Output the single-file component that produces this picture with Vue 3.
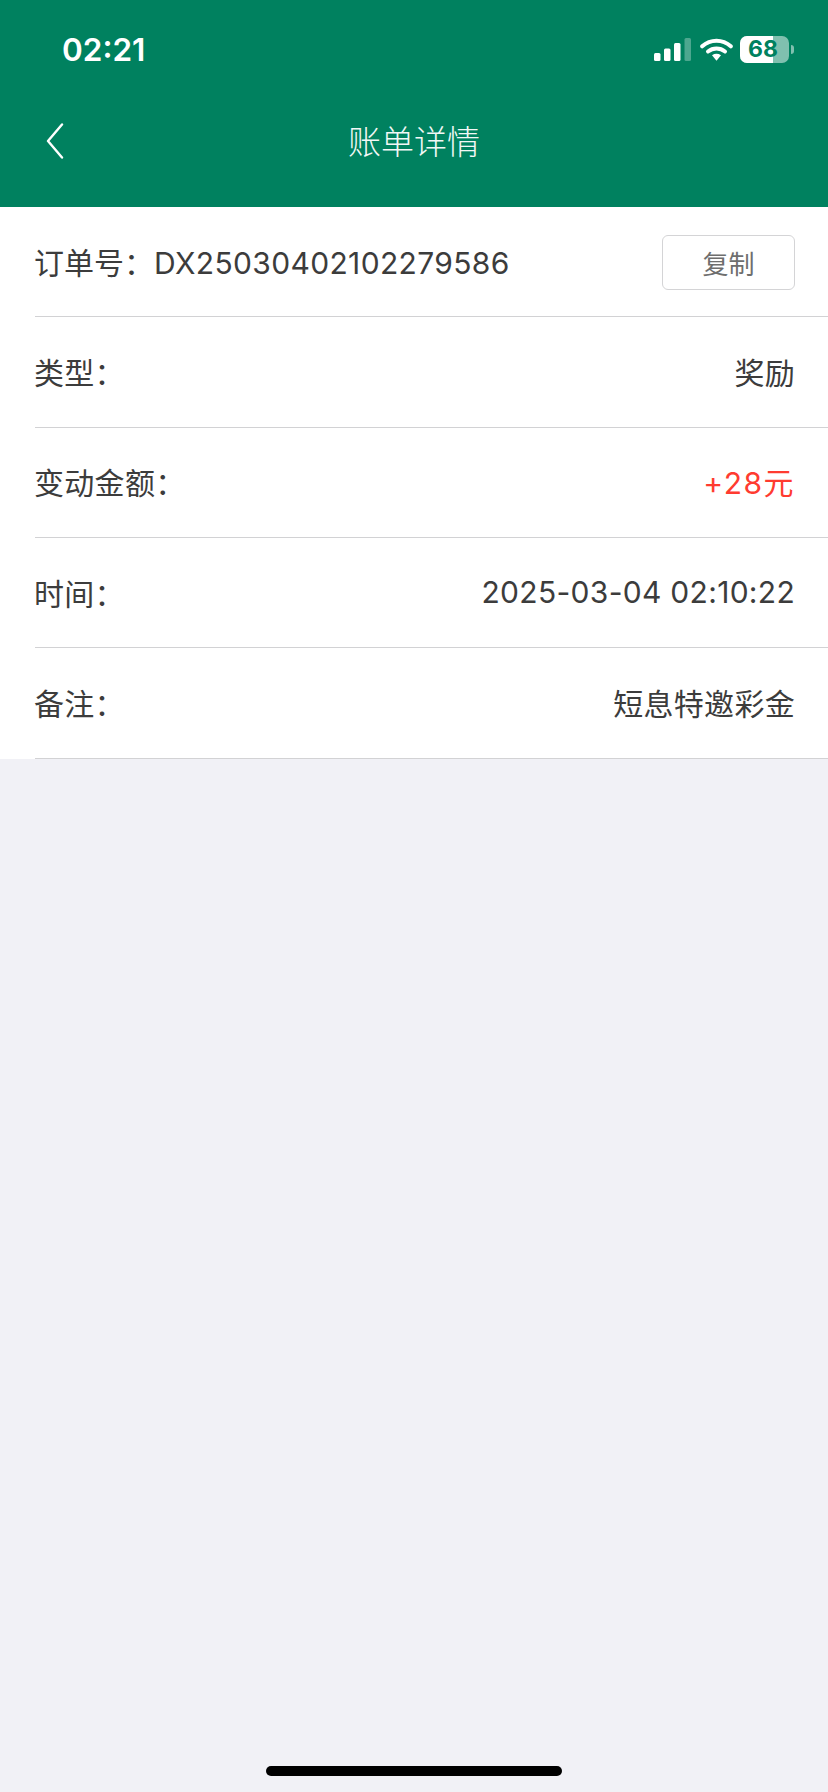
<template>
  <div class="page">
    <div class="header">
      <div class="status-bar">
        <span class="clock">02:21</span>
        <div class="status-icons">
          <svg class="signal" width="37" height="23" viewBox="0 0 37 23">
            <rect x="0" y="15" width="6.5" height="8" rx="1.5" fill="#fff" />
            <rect x="10" y="10.5" width="6.5" height="12.5" rx="1.5" fill="#fff" />
            <rect x="20" y="5" width="6.5" height="18" rx="1.5" fill="#fff" />
            <rect x="30.5" y="0" width="6.5" height="23" rx="1.5" fill="#fff" fill-opacity="0.3" />
          </svg>
          <svg class="wifi" width="33" height="23" viewBox="0 0 33 23">
            <path d="M2.2 8.3C10.5 0.8 22.5 0.8 30.8 8.3" fill="none" stroke="#fff" stroke-width="4" stroke-linecap="round" />
            <path d="M8 13.5C13 9.5 20 9.5 25 13.5" fill="none" stroke="#fff" stroke-width="4" stroke-linecap="round" />
            <path d="M12 17.2C15 15.3 18 15.3 21 17.2L16.5 22.8Z" fill="#fff" />
          </svg>
          <div class="battery">
            <div class="battery-body">
              <div class="battery-fill" :style="{ width: battery + '%' }"></div>
              <span class="battery-num">{{ battery }}</span>
            </div>
            <div class="battery-cap"></div>
          </div>
        </div>
      </div>
      <div class="nav-bar">
        <svg class="back" width="18" height="36" viewBox="0 0 18 36">
          <path d="M16 1.5L2 18L16 34.5" fill="none" stroke="#fff" stroke-width="2.4" stroke-linecap="round" stroke-linejoin="round" />
        </svg>
        <span class="title">账单详情</span>
      </div>
    </div>

    <div class="list">
      <div class="row">
        <span><span class="order-label">订单号：</span><span class="order-no">DX25030402102279586</span></span>
        <button class="copy-btn">复制</button>
      </div>
      <div v-for="item in rows" :key="item.label" class="row">
        <span>{{ item.label }}</span>
        <span :class="{ red: item.red }">{{ item.value }}</span>
      </div>
    </div>

    <div class="home-bar"></div>
  </div>
</template>

<script setup>
const battery = 68

const rows = [
  { label: '类型：', value: '奖励' },
  { label: '变动金额：', value: '+28元', red: true },
  { label: '时间：', value: '2025-03-04 02:10:22' },
  { label: '备注：', value: '短息特邀彩金' }
]
</script>

<style>
html, body { margin: 0; background: #f1f1f6; }
</style>

<style scoped>
.page {
  position: relative;
  height: 1792px;
  background: #f1f1f6;
  font-family: "Inter", "Noto Sans CJK SC", sans-serif;
}
.header { height: 207px; background: #00815f; color: #fff; }
.status-bar {
  height: 100px;
  box-sizing: border-box;
  padding: 30px 34px 0 62px;
  display: flex;
  justify-content: space-between;
  align-items: flex-start;
}
.clock { font-size: 31.5px; font-weight: 600; line-height: 40px; }
.status-icons { display: flex; align-items: center; gap: 9px; padding-top: 6px; }
.battery { display: flex; align-items: center; gap: 2px; margin-left: -2px; }
.battery-body {
  position: relative;
  width: 49px;
  height: 27px;
  border-radius: 7px;
  background: rgba(255, 255, 255, 0.5);
}
.battery-fill { height: 100%; background: #fff; border-radius: 7px 0 0 7px; }
.battery-num {
  position: absolute;
  left: 8px;
  top: 0;
  font-size: 23px;
  font-weight: 700;
  line-height: 27px;
  color: #00815f;
}
.battery-cap {
  width: 3px;
  height: 9px;
  border-radius: 0 3px 3px 0;
  background: rgba(255, 255, 255, 0.5);
}
.nav-bar { position: relative; height: 107px; display: flex; align-items: center; justify-content: center; padding-bottom: 23px; box-sizing: border-box; }
.back { position: absolute; left: 46px; top: 23px; }
.title {
  font-size: 33px;
  font-weight: 300;
  line-height: 48px;
  color: #f2f8f6;
}

.list { background: #fff; }
.row {
  height: 110.33px;
  box-sizing: border-box;
  margin-left: 35px;
  padding-right: 33px;
  padding-bottom: 2px;
  display: flex;
  align-items: center;
  justify-content: space-between;
  border-bottom: 1.5px solid #d2d2d4;
  font-size: 30px;
  letter-spacing: 0.3px;
  color: #3c3c3c;
  white-space: nowrap;
}
.row > span { margin-left: -1px; }
.order-label { letter-spacing: 0; }
.order-no { letter-spacing: 0.35px; }
.red { color: #ff3b30; letter-spacing: 1.5px; }
.copy-btn {
  width: 133px;
  height: 55px;
  margin-top: 3px;
  padding: 0;
  background: #fff;
  border: 1px solid #d4d4d6;
  border-radius: 6px;
  font-family: inherit;
  font-size: 26px;
  color: #6e6e6e;
}
.home-bar {
  position: absolute;
  left: 266px;
  bottom: 16px;
  width: 296px;
  height: 10px;
  border-radius: 5px;
  background: #000;
}
</style>
